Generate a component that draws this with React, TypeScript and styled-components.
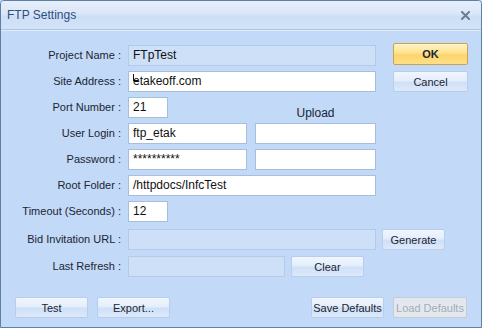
import React from 'react';
import styled, { createGlobalStyle } from 'styled-components';

const GlobalStyle = createGlobalStyle`
  html, body {
    margin: 0;
    padding: 0;
    background: #c2d9f7;
  }
  body {
    font-family: 'Liberation Sans', Arial, sans-serif;
    font-size: 11px;
    color: #1b2533;
  }
`;

const Window = styled.div`
  width: 482px;
  height: 328px;
  box-sizing: border-box;
  border: 1px solid #5d7fa8;
  border-radius: 4px 4px 0 0;
  display: flex;
  flex-direction: column;
  background: #c2d9f7;
  overflow: hidden;
`;

const TitleBar = styled.div`
  height: 28px;
  flex: none;
  display: flex;
  align-items: center;
  justify-content: space-between;
  padding: 0 11px 0 6px;
  background: linear-gradient(#e6eefa 0%, #dbe7f8 45%, #cddff6 55%, #d3e3f8 100%);
  border-bottom: 1px solid #a9c3e6;
  color: #2d4f80;
  font-size: 12px;
`;

const CloseIcon = styled.svg`
  width: 9px;
  height: 9px;
  display: block;
`;

const Body = styled.div`
  flex: 1;
  display: flex;
  flex-direction: column;
  padding-top: 14px;
  border-top: 1px solid #e3eefc;
`;

const Rows = styled.div`
  display: flex;
  flex-direction: column;
`;

const Row = styled.div<{ $gap?: number }>`
  display: flex;
  align-items: flex-start;
  height: 21px;
  margin-bottom: ${({ $gap }) => $gap ?? 5}px;
`;

const Label = styled.div`
  width: 120px;
  flex: none;
  text-align: right;
  line-height: 21px;
  margin-right: 7px;
  white-space: nowrap;
`;

const Field = styled.div<{ $w: number; $disabled?: boolean }>`
  position: relative;
  width: ${({ $w }) => $w}px;
  height: 21px;
  box-sizing: border-box;
  flex: none;
  padding: 0 4px;
  line-height: 19px;
  font-size: 12px;
  color: #111;
  background: ${({ $disabled }) => ($disabled ? '#cde0f8' : '#ffffff')};
  border: 1px solid ${({ $disabled }) => ($disabled ? '#b3cbe9' : '#a7bfdc')};
`;

const Caret = styled.span`
  position: absolute;
  left: 4px;
  top: 2px;
  width: 4px;
  height: 6px;
  border-left: 1px solid #111;
  border-bottom: 1px solid #111;
`;

const UploadHeading = styled.div`
  width: 121px;
  margin-left: 87px;
  text-align: center;
  font-size: 12px;
  line-height: 12px;
  padding-top: 10px;
`;

type Kind = 'default' | 'primary' | 'disabled';

const Button = styled.button<{ $w: number; $kind?: Kind }>`
  width: ${({ $w }) => $w}px;
  height: 21px;
  flex: none;
  box-sizing: border-box;
  padding: 0;
  margin: 0;
  font-family: inherit;
  font-size: 11px;
  white-space: nowrap;
  overflow: hidden;
  border-radius: 2px;
  cursor: default;
  color: ${({ $kind }) => ($kind === 'disabled' ? '#a3acb8' : '#1b2533')};
  font-weight: ${({ $kind }) => ($kind === 'primary' ? 'bold' : 'normal')};
  border: 1px solid
    ${({ $kind }) =>
      $kind === 'primary' ? '#c5a453' : $kind === 'disabled' ? '#c4ccd6' : '#b8cde9'};
  background: ${({ $kind }) =>
    $kind === 'primary'
      ? 'linear-gradient(#fff3c4 0%, #fee38f 45%, #fdd46a 55%, #fee08a 100%)'
      : $kind === 'disabled'
        ? '#e3e8ef'
        : 'linear-gradient(#f1f6fe 0%, #e3eefc 45%, #cfe0f7 55%, #dde9fb 100%)'};
`;

const Footer = styled.div`
  display: flex;
  align-items: center;
  margin-top: auto;
  padding: 0 14px 9px 14px;
  gap: 9px;
`;

const Spacer = styled.div`
  flex: 1;
`;

export default function App() {
  return (
    <>
      <GlobalStyle />
      <Window>
        <TitleBar>
          <span>FTP Settings</span>
          <CloseIcon viewBox="0 0 9 9">
            <path d="M1 1 L8 8 M8 1 L1 8" stroke="#6a7e98" strokeWidth="2" strokeLinecap="square" />
          </CloseIcon>
        </TitleBar>
        <Body>
          <Rows>
            <Row>
              <Label>Project Name :</Label>
              <Field $w={248} $disabled>FTpTest</Field>
              <Button $w={75} $kind="primary" style={{ marginLeft: 17, marginTop: -2, height: 22 }}>
                OK
              </Button>
            </Row>
            <Row>
              <Label>Site Address :</Label>
              <Field $w={248}>
                <Caret />
                etakeoff.com
              </Field>
              <Button $w={75} style={{ marginLeft: 17 }}>Cancel</Button>
            </Row>
            <Row>
              <Label>Port Number :</Label>
              <Field $w={40}>21</Field>
              <UploadHeading>Upload</UploadHeading>
            </Row>
            <Row>
              <Label>User Login :</Label>
              <Field $w={119}>ftp_etak</Field>
              <Field $w={121} style={{ marginLeft: 8 }} />
            </Row>
            <Row>
              <Label>Password :</Label>
              <Field $w={119}>**********</Field>
              <Field $w={121} style={{ marginLeft: 8 }} />
            </Row>
            <Row>
              <Label>Root Folder :</Label>
              <Field $w={248}>/httpdocs/InfcTest</Field>
            </Row>
            <Row $gap={7}>
              <Label>Timeout (Seconds) :</Label>
              <Field $w={40}>12</Field>
            </Row>
            <Row $gap={6}>
              <Label>Bid Invitation URL :</Label>
              <Field $w={248} $disabled />
              <Button $w={63} style={{ marginLeft: 6 }}>Generate</Button>
            </Row>
            <Row>
              <Label>Last Refresh :</Label>
              <Field $w={157} $disabled />
              <Button $w={73} style={{ marginLeft: 6 }}>Clear</Button>
            </Row>
          </Rows>
          <Footer>
            <Button $w={73}>Test</Button>
            <Button $w={73}>Export...</Button>
            <Spacer />
            <Button $w={73}>Save Defaults</Button>
            <Button $w={74} $kind="disabled">Load Defaults</Button>
          </Footer>
        </Body>
      </Window>
    </>
  );
}
